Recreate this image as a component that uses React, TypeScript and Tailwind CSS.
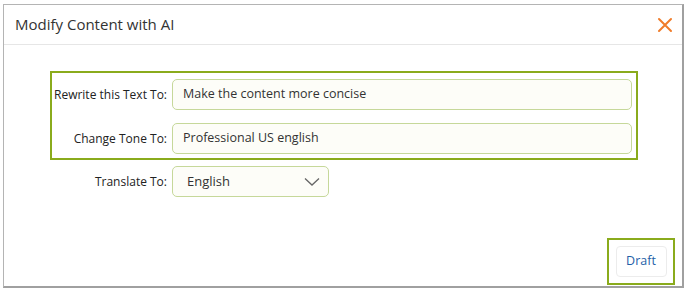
import React from "react";

export default function App() {
  const font = { fontFamily: '"Open Sans", "Noto Sans", sans-serif' };
  const label = "w-[120px] shrink-0 whitespace-nowrap text-right text-[12px] font-medium text-[#222] pr-[5px]";
  const input = "w-[460px] h-[31px] rounded-[5px] border border-[#c6d89a] bg-[#fdfdf8] flex items-center pl-[10px] text-[12.5px] text-[#333]";
  return (
    <div className="w-[688px] h-[291px] bg-white overflow-hidden" style={font}>
      <div className="ml-[3px] mt-[4px] w-[681px] h-[284px] border border-[#b4b4b4] border-r-2 border-b-2 border-r-[#a0a0a0] border-b-[#a0a0a0] flex flex-col">
        <div className="h-[40px] shrink-0 flex items-center justify-between pl-[11px] pr-[9px] border-b border-[#e6e6e6]">
          <span className="text-[15px] text-[#333]">Modify Content with AI</span>
          <svg width="16" height="16" viewBox="0 0 16 16" className="mt-[1px]">
            <path d="M2 2 L14 14 M14 2 L2 14" stroke="#f07c2a" strokeWidth="2" strokeLinecap="round" />
          </svg>
        </div>
        <div className="flex-1 flex flex-col relative">
          <div className="ml-[46px] mt-[26px] w-[588px] border-2 border-[#8aab1c] flex flex-col gap-[13px] pt-[6px] pb-[4px]">
            <div className="flex items-center">
              <div className={label}>Rewrite this Text To:</div>
              <div className={input}>Make the content more concise</div>
            </div>
            <div className="flex items-center">
              <div className={label}>Change Tone To:</div>
              <div className={input}>Professional US english</div>
            </div>
          </div>
          <div className="flex items-center mt-[6px] ml-[48px]">
            <div className={label}>Translate To:</div>
            <div className="w-[157px] h-[31px] rounded-[5px] border border-[#c6d89a] bg-[#fdfdf8] flex items-center justify-between pl-[14px] pr-[8px] text-[13px] text-[#333]">
              <span>English</span>
              <svg width="16" height="10" viewBox="0 0 16 10">
                <path d="M1 1.5 L8 8 L15 1.5" fill="none" stroke="#666" strokeWidth="1.3" />
              </svg>
            </div>
          </div>
          <div className="flex-1" />
          <div className="flex justify-end pr-[7px] pb-[1px]">
            <div className="w-[68px] h-[47px] border-2 border-[#8aab1c] flex items-center justify-center">
              <div className="w-[51px] h-[31px] rounded-[4px] border border-[#ececec] bg-white flex items-center justify-center text-[12.5px] text-[#1f5fa8]">
                Draft
              </div>
            </div>
          </div>
        </div>
      </div>
    </div>
  );
}
